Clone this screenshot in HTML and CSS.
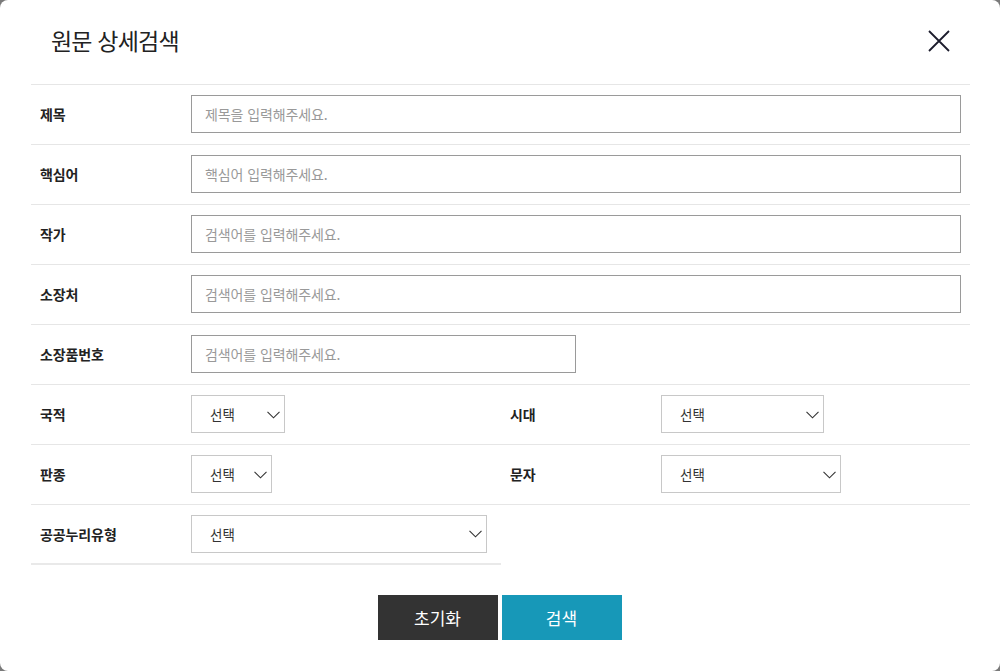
FILE: index.html
```html
<!DOCTYPE html>
<html lang="ko">
<head>
<meta charset="utf-8">
<title>원문 상세검색</title>
<link rel="stylesheet" href="styles.css">
</head>
<body>
<div class="modal">
  <div class="modal-head">
    <h2 class="title">원문 상세검색</h2>
    <button class="close" type="button" aria-label="닫기">
      <svg width="22" height="22" viewBox="0 0 22 22"><path d="M1 1 L21 21 M21 1 L1 21" stroke="#1c1c2c" stroke-width="1.8" fill="none"/></svg>
    </button>
  </div>
  <div class="form">
    <div class="row full">
      <div class="label">제목</div>
      <input class="text wide" type="text" placeholder="제목을 입력해주세요.">
    </div>
    <div class="row full">
      <div class="label">핵심어</div>
      <input class="text wide" type="text" placeholder="핵심어 입력해주세요.">
    </div>
    <div class="row full">
      <div class="label">작가</div>
      <input class="text wide" type="text" placeholder="검색어를 입력해주세요.">
    </div>
    <div class="row full">
      <div class="label">소장처</div>
      <input class="text wide" type="text" placeholder="검색어를 입력해주세요.">
    </div>
    <div class="row full">
      <div class="label">소장품번호</div>
      <input class="text half" type="text" placeholder="검색어를 입력해주세요.">
    </div>
    <div class="row">
      <div class="label">국적</div>
      <div class="select w94"><span>선택</span><svg class="chev" width="13" height="8" viewBox="0 0 13 8"><path d="M0.5 0.8 L6.5 6.8 L12.5 0.8" stroke="#333" stroke-width="1.1" fill="none"/></svg></div>
    </div>
    <div class="row">
      <div class="label">시대</div>
      <div class="select w163"><span>선택</span><svg class="chev" width="13" height="8" viewBox="0 0 13 8"><path d="M0.5 0.8 L6.5 6.8 L12.5 0.8" stroke="#333" stroke-width="1.1" fill="none"/></svg></div>
    </div>
    <div class="row">
      <div class="label">판종</div>
      <div class="select w81"><span>선택</span><svg class="chev" width="13" height="8" viewBox="0 0 13 8"><path d="M0.5 0.8 L6.5 6.8 L12.5 0.8" stroke="#333" stroke-width="1.1" fill="none"/></svg></div>
    </div>
    <div class="row">
      <div class="label">문자</div>
      <div class="select w180"><span>선택</span><svg class="chev" width="13" height="8" viewBox="0 0 13 8"><path d="M0.5 0.8 L6.5 6.8 L12.5 0.8" stroke="#333" stroke-width="1.1" fill="none"/></svg></div>
    </div>
    <div class="row last">
      <div class="label">공공누리유형</div>
      <div class="select w296"><span>선택</span><svg class="chev" width="13" height="8" viewBox="0 0 13 8"><path d="M0.5 0.8 L6.5 6.8 L12.5 0.8" stroke="#333" stroke-width="1.1" fill="none"/></svg></div>
    </div>
    <div class="row empty"></div>
  </div>
  <div class="actions">
    <button class="btn reset" type="button">초기화</button>
    <button class="btn search" type="button">검색</button>
  </div>
</div>
</body>
</html>
```

FILE: styles.css
```css
* { box-sizing: border-box; }
html, body { margin: 0; padding: 0; }
body {
  background: #7a7a7a;
  font-family: "Noto Sans CJK KR", "Noto Sans", sans-serif;
  color: #222;
}
.modal {
  width: 1000px;
  height: 671px;
  background: #fff;
  border-radius: 8px;
  overflow: hidden;
  padding: 0 30px 0 31px;
}
.modal-head {
  height: 84px;
  display: flex;
  align-items: center;
  justify-content: space-between;
  padding: 0 20px 4px 20px;
}
.title {
  margin: 0;
  font-size: 23px;
  font-weight: 400;
  color: #222;
  letter-spacing: -0.8px;
}
.close {
  border: 0;
  background: none;
  padding: 0;
  width: 22px;
  height: 22px;
  display: flex;
  position: relative;
  top: 1px;
  cursor: pointer;
}
.form {
  display: grid;
  grid-template-columns: 470px 469px;
}
.row {
  height: 60px;
  border-top: 1px solid #e6e6e6;
  display: flex;
  align-items: center;
  padding-bottom: 1px;
}
.row.full { grid-column: 1 / 3; }
.row.last { border-bottom: 2px solid #e9e9e9; height: 61px; }
.row.empty { height: 61px; }
.label {
  width: 160px;
  padding-left: 9px;
  font-size: 14px;
  font-weight: 700;
  color: #222;
  letter-spacing: -0.1px;
}
.text {
  height: 38px;
  border: 1px solid #9a9a9a;
  padding: 0 13px;
  font-family: inherit;
  font-size: 14px;
  letter-spacing: -0.1px;
  color: #333;
  outline: none;
}
.text::placeholder { color: #999; }
.text.wide { width: 770px; }
.text.half { width: 385px; }
.select {
  height: 38px;
  border: 1px solid #c8c8c8;
  display: flex;
  align-items: center;
  justify-content: space-between;
  padding: 0 2px 0 18px;
  font-size: 13.5px;
  color: #333;
}
.chev {
  margin-right: 2px;
  margin-top: 1px;
}
.w94 { width: 94px; }
.w163 { width: 163px; }
.w81 { width: 81px; }
.w180 { width: 180px; }
.w296 { width: 296px; }
.actions {
  display: flex;
  justify-content: center;
  gap: 4px;
  margin: 30px 0 0 -2px;
}
.btn {
  width: 120px;
  height: 45px;
  border: 0;
  color: #fff;
  font-family: inherit;
  font-size: 17px;
  cursor: pointer;
}
.reset { background: #333; }
.search { background: #1798b8; }
```
